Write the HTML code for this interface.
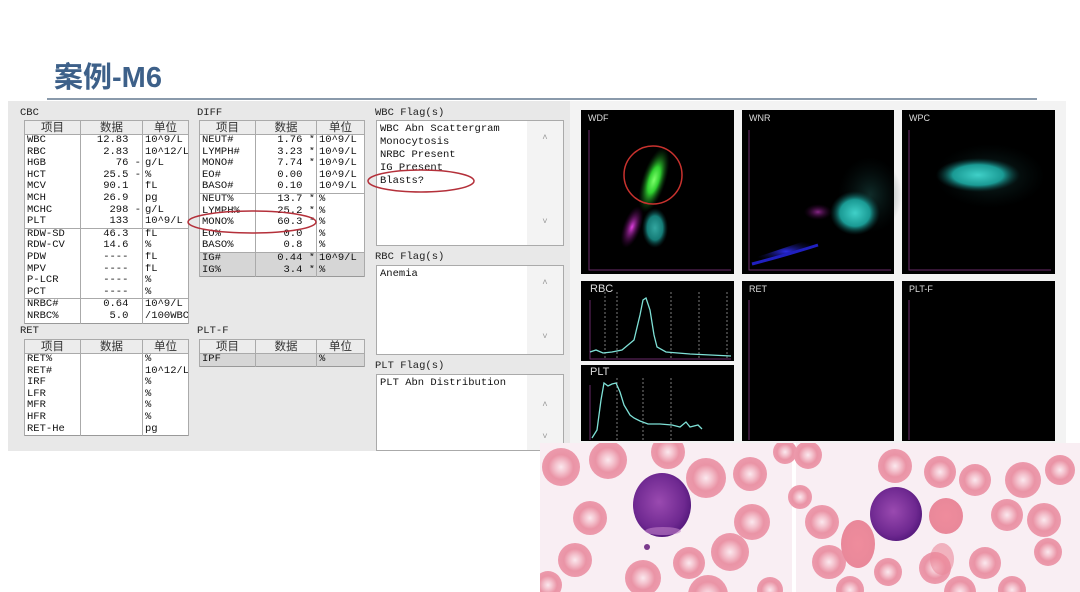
<!DOCTYPE html>
<html><head><meta charset="utf-8"><style>
*{margin:0;padding:0;box-sizing:border-box}
body{width:1080px;height:592px;background:#fff;position:relative;overflow:hidden;font-family:"Liberation Mono",monospace;}
.a{position:absolute}
.title{left:54px;top:54px;font:bold 29px "Liberation Sans","Noto Sans CJK SC",sans-serif;color:#3d6089;letter-spacing:0px}
.lbl{font-size:10.5px;color:#222;position:absolute}
table{border-collapse:collapse;position:absolute;background:#fff;font-size:10.5px;color:#111;table-layout:fixed;border:1px solid #999}
th{font:normal 11.5px "Noto Sans CJK SC",sans-serif;color:#333;background:#ececec;border:1px solid #aaa;height:14px;line-height:13px;font-weight:normal}
td{height:11.6px;line-height:11.6px;padding:0 2px;white-space:pre;overflow:hidden;border-left:1px solid #aaa;border-right:1px solid #aaa}
td.r{text-align:right;padding-right:1px}
tr.s td{border-top:1px solid #aaa}
tr.gy td{background:#d6d6d6}
.box{position:absolute;background:#fff;border:1px solid #aaa;font-size:10.5px;line-height:13px;padding:2px 3px;color:#111;white-space:pre}
.sb{position:absolute;background:#f3f3f3;font-size:9px;color:#999;text-align:center}
.gl{position:absolute;color:#ddd;font:10px "Liberation Sans",sans-serif}
</style></head><body>
<div class="a title">案例-M6</div>
<div class="a" style="left:47px;top:98px;width:990px;height:2px;background:#8a9aab"></div>
<div class="a" style="left:8px;top:101px;width:1058px;height:350px;background:#e8e8e8"></div>
<div class="a" style="left:570px;top:101px;width:496px;height:350px;background:#f3f3f3"></div>

<div class="lbl" style="left:20px;top:107px">CBC</div>
<table style="left:24px;top:120px;width:164px">
<colgroup><col style="width:56px"><col style="width:62px"><col style="width:46px"></colgroup>
<tr><th>项目</th><th>数据</th><th>单位</th></tr>
<tr><td>WBC</td><td class="r">12.83  </td><td>10^9/L</td></tr>
<tr><td>RBC</td><td class="r">2.83  </td><td>10^12/L</td></tr>
<tr><td>HGB</td><td class="r">76 -</td><td>g/L</td></tr>
<tr><td>HCT</td><td class="r">25.5 -</td><td>%</td></tr>
<tr><td>MCV</td><td class="r">90.1  </td><td>fL</td></tr>
<tr><td>MCH</td><td class="r">26.9  </td><td>pg</td></tr>
<tr><td>MCHC</td><td class="r">298 -</td><td>g/L</td></tr>
<tr><td>PLT</td><td class="r">133  </td><td>10^9/L</td></tr>
<tr class="s"><td>RDW-SD</td><td class="r">46.3  </td><td>fL</td></tr>
<tr><td>RDW-CV</td><td class="r">14.6  </td><td>%</td></tr>
<tr><td>PDW</td><td class="r">----  </td><td>fL</td></tr>
<tr><td>MPV</td><td class="r">----  </td><td>fL</td></tr>
<tr><td>P-LCR</td><td class="r">----  </td><td>%</td></tr>
<tr><td>PCT</td><td class="r">----  </td><td>%</td></tr>
<tr class="s"><td>NRBC#</td><td class="r">0.64  </td><td>10^9/L</td></tr>
<tr><td>NRBC%</td><td class="r">5.0  </td><td>/100WBC</td></tr>
</table>

<div class="lbl" style="left:197px;top:107px">DIFF</div>
<table style="left:199px;top:120px;width:165px">
<colgroup><col style="width:56px"><col style="width:61px"><col style="width:48px"></colgroup>
<tr><th>项目</th><th>数据</th><th>单位</th></tr>
<tr><td>NEUT#</td><td class="r">1.76 *</td><td>10^9/L</td></tr>
<tr><td>LYMPH#</td><td class="r">3.23 *</td><td>10^9/L</td></tr>
<tr><td>MONO#</td><td class="r">7.74 *</td><td>10^9/L</td></tr>
<tr><td>EO#</td><td class="r">0.00  </td><td>10^9/L</td></tr>
<tr><td>BASO#</td><td class="r">0.10  </td><td>10^9/L</td></tr>
<tr class="s"><td>NEUT%</td><td class="r">13.7 *</td><td>%</td></tr>
<tr><td>LYMPH%</td><td class="r">25.2 *</td><td>%</td></tr>
<tr><td>MONO%</td><td class="r">60.3 *</td><td>%</td></tr>
<tr><td>EO%</td><td class="r">0.0  </td><td>%</td></tr>
<tr><td>BASO%</td><td class="r">0.8  </td><td>%</td></tr>
<tr class="s gy"><td>IG#</td><td class="r">0.44 *</td><td>10^9/L</td></tr>
<tr class="gy"><td>IG%</td><td class="r">3.4 *</td><td>%</td></tr>
</table>

<div class="lbl" style="left:20px;top:325px">RET</div>
<table style="left:24px;top:339px;width:164px">
<colgroup><col style="width:56px"><col style="width:62px"><col style="width:46px"></colgroup>
<tr><th>项目</th><th>数据</th><th>单位</th></tr>
<tr><td>RET%</td><td></td><td>%</td></tr>
<tr><td>RET#</td><td></td><td>10^12/L</td></tr>
<tr><td>IRF</td><td></td><td>%</td></tr>
<tr><td>LFR</td><td></td><td>%</td></tr>
<tr><td>MFR</td><td></td><td>%</td></tr>
<tr><td>HFR</td><td></td><td>%</td></tr>
<tr><td>RET-He</td><td></td><td>pg</td></tr>
</table>

<div class="lbl" style="left:197px;top:325px">PLT-F</div>
<table style="left:199px;top:339px;width:165px">
<colgroup><col style="width:56px"><col style="width:61px"><col style="width:48px"></colgroup>
<tr><th>项目</th><th>数据</th><th>单位</th></tr>
<tr class="gy"><td>IPF</td><td></td><td>%</td></tr>
</table>

<div class="lbl" style="left:375px;top:107px">WBC Flag(s)</div>
<div class="box" style="left:376px;top:120px;width:188px;height:126px">WBC Abn Scattergram
Monocytosis
NRBC Present
IG Present
Blasts?</div>
<div class="sb" style="left:527px;top:121px;width:36px;height:124px"><div style="margin-top:12px">˄</div><div style="margin-top:74px">˅</div></div>
<div class="lbl" style="left:375px;top:251px">RBC Flag(s)</div>
<div class="box" style="left:376px;top:265px;width:188px;height:90px">Anemia</div>
<div class="sb" style="left:527px;top:266px;width:36px;height:88px"><div style="margin-top:12px">˄</div><div style="margin-top:44px">˅</div></div>
<div class="lbl" style="left:375px;top:360px">PLT Flag(s)</div>
<div class="box" style="left:376px;top:374px;width:188px;height:77px">PLT Abn Distribution</div>
<div class="sb" style="left:527px;top:375px;width:36px;height:75px"><div style="margin-top:25px">˄</div><div style="margin-top:22px">˅</div></div>

<svg class="a" style="left:575px;top:105px" width="490" height="345" viewBox="575 105 490 345">
<defs>
<radialGradient id="gr" cx="50%" cy="50%" r="50%"><stop offset="0" stop-color="#7dff6a"/><stop offset=".4" stop-color="#30d030"/><stop offset="1" stop-color="#0a4010" stop-opacity="0"/></radialGradient>
<radialGradient id="mg" cx="50%" cy="50%" r="50%"><stop offset="0" stop-color="#e040e0"/><stop offset="1" stop-color="#500050" stop-opacity="0"/></radialGradient>
<radialGradient id="cy" cx="50%" cy="50%" r="50%"><stop offset="0" stop-color="#40d0c8"/><stop offset=".6" stop-color="#1a9a94"/><stop offset="1" stop-color="#0a4040" stop-opacity="0"/></radialGradient>
<radialGradient id="fd" cx="50%" cy="50%" r="50%"><stop offset="0" stop-color="#1a4a46" stop-opacity=".6"/><stop offset="1" stop-color="#0a2020" stop-opacity="0"/></radialGradient>
<radialGradient id="bl" cx="50%" cy="50%" r="50%"><stop offset="0" stop-color="#3030ff"/><stop offset="1" stop-color="#101060" stop-opacity="0"/></radialGradient>
</defs>
<rect x="581" y="110" width="153" height="164" fill="#000"/>
<rect x="742" y="110" width="152" height="164" fill="#000"/>
<rect x="902" y="110" width="153" height="164" fill="#000"/>
<rect x="581" y="281" width="153" height="80" fill="#000"/>
<rect x="581" y="365" width="153" height="76" fill="#000"/>
<rect x="742" y="281" width="152" height="160" fill="#000"/>
<rect x="902" y="281" width="153" height="160" fill="#000"/>
<g stroke="#6a2a6a" stroke-width="1" fill="none">
<path d="M589 130V270H731M749 130V270H891M909 130V270H1051M590 300V359H731M590 385V440M749 300V440M909 300V440"/>
</g>
<ellipse cx="654" cy="180" rx="12" ry="34" transform="rotate(18 654 180)" fill="url(#gr)"/>
<ellipse cx="632" cy="227" rx="9" ry="22" transform="rotate(20 632 227)" fill="url(#mg)"/>
<ellipse cx="655" cy="228" rx="13" ry="20" fill="url(#cy)" opacity=".8"/>
<circle cx="653" cy="175" r="29" fill="none" stroke="#c8322e" stroke-width="1.5"/>
<ellipse cx="870" cy="195" rx="32" ry="38" fill="url(#fd)"/>
<ellipse cx="818" cy="212" rx="14" ry="8" fill="url(#mg)" opacity=".6"/>
<ellipse cx="855" cy="213" rx="25" ry="22" fill="url(#cy)"/>
<path d="M752 263Q790 250 820 240" stroke="url(#bl)" stroke-width="8" fill="none" opacity=".9"/>
<path d="M752 264Q790 254 818 245" stroke="#2020c0" stroke-width="3" fill="none"/>
<ellipse cx="990" cy="176" rx="55" ry="32" fill="url(#fd)"/>
<ellipse cx="978" cy="175" rx="42" ry="17" fill="url(#cy)"/>
<g stroke="#ccc" stroke-dasharray="2 2" stroke-width=".6"><path d="M605 292V359M617 292V359M671 292V359M699 292V359M727 292V359M617 378V440M643 378V440M671 378V440"/></g>
<path d="M590 352L596 350L603 353L612 352L622 350L628 345L634 340L640 315L643 300L646 298L650 310L654 335L657 347L666 352L690 354L731 356" stroke="#7ee0d6" stroke-width="1.3" fill="none"/>
<path d="M592 438L597 430L601 400L604 383L608 386L612 384L616 383L620 392L624 405L630 415L634 418L640 421L648 424L660 424L672 425L680 427L686 422L690 427L698 425L702 429" stroke="#7ee0d6" stroke-width="1.3" fill="none"/>
</svg>
<div class="gl" style="left:588px;top:113px;font-size:9px">WDF</div>
<div class="gl" style="left:749px;top:113px;font-size:9px">WNR</div>
<div class="gl" style="left:909px;top:113px;font-size:9px">WPC</div>
<div class="gl" style="left:590px;top:283px;font-size:11px">RBC</div>
<div class="gl" style="left:590px;top:366px;font-size:11px">PLT</div>
<div class="gl" style="left:749px;top:284px;font-size:9px">RET</div>
<div class="gl" style="left:909px;top:284px;font-size:9px">PLT-F</div>

<svg class="a" style="left:0;top:0" width="1080" height="592">
<ellipse cx="252" cy="222" rx="64" ry="11" fill="none" stroke="#b4303a" stroke-width="1.5"/>
<ellipse cx="421" cy="181" rx="53" ry="11" fill="none" stroke="#b4303a" stroke-width="1.5"/>
</svg>

<svg class="a" style="left:540px;top:443px" width="540" height="149" viewBox="540 443 540 149">
<defs>
<radialGradient id="rb" cx="50%" cy="50%" r="50%"><stop offset="0" stop-color="#fbe8ee"/><stop offset=".3" stop-color="#f4c4cf"/><stop offset=".65" stop-color="#ea94a6"/><stop offset="1" stop-color="#ec9aac"/></radialGradient>
<radialGradient id="rs" cx="50%" cy="50%" r="50%"><stop offset="0" stop-color="#ef8c9c"/><stop offset="1" stop-color="#e9889a"/></radialGradient>
<radialGradient id="bc" cx="45%" cy="45%" r="55%"><stop offset="0" stop-color="#9a4ab0"/><stop offset=".8" stop-color="#6e2890"/><stop offset="1" stop-color="#5a1c80"/></radialGradient>
</defs>
<rect x="540" y="443" width="252" height="149" fill="#f9eef3"/>
<rect x="796" y="443" width="284" height="149" fill="#f9eef3"/>
<rect x="792" y="443" width="4" height="149" fill="#fff"/>
<g fill="url(#rb)">
<circle cx="561" cy="467" r="19"/><circle cx="608" cy="460" r="19"/><circle cx="668" cy="452" r="17"/><circle cx="706" cy="478" r="20"/><circle cx="750" cy="474" r="17"/><circle cx="785" cy="452" r="12"/>
<circle cx="590" cy="518" r="17"/><circle cx="752" cy="522" r="18"/><circle cx="575" cy="560" r="17"/><circle cx="643" cy="578" r="18"/><circle cx="689" cy="563" r="16"/><circle cx="730" cy="552" r="19"/><circle cx="548" cy="585" r="14"/><circle cx="708" cy="595" r="20"/><circle cx="770" cy="590" r="13"/>
<circle cx="808" cy="455" r="14"/><circle cx="895" cy="466" r="17"/><circle cx="940" cy="472" r="16"/><circle cx="975" cy="480" r="16"/><circle cx="1023" cy="480" r="18"/><circle cx="1060" cy="470" r="15"/>
<circle cx="800" cy="497" r="12"/><circle cx="822" cy="522" r="17"/><circle cx="1007" cy="515" r="16"/><circle cx="1044" cy="520" r="17"/><circle cx="829" cy="562" r="17"/><circle cx="888" cy="572" r="14"/><circle cx="935" cy="568" r="16"/><circle cx="985" cy="563" r="16"/><circle cx="1048" cy="552" r="14"/><circle cx="850" cy="590" r="14"/><circle cx="960" cy="592" r="16"/><circle cx="1012" cy="590" r="14"/>
</g>
<g fill="url(#rs)"><ellipse cx="946" cy="516" rx="17" ry="18"/><ellipse cx="858" cy="544" rx="17" ry="24"/><ellipse cx="942" cy="559" rx="12" ry="16" opacity=".6"/></g>
<ellipse cx="662" cy="505" rx="29" ry="32" fill="url(#bc)"/>
<ellipse cx="663" cy="531" rx="18" ry="4" fill="#c080c8" opacity=".6"/>
<ellipse cx="896" cy="514" rx="26" ry="27" fill="url(#bc)"/>
<circle cx="647" cy="547" r="3" fill="#7b3a8c"/>
</svg>
</body></html>
